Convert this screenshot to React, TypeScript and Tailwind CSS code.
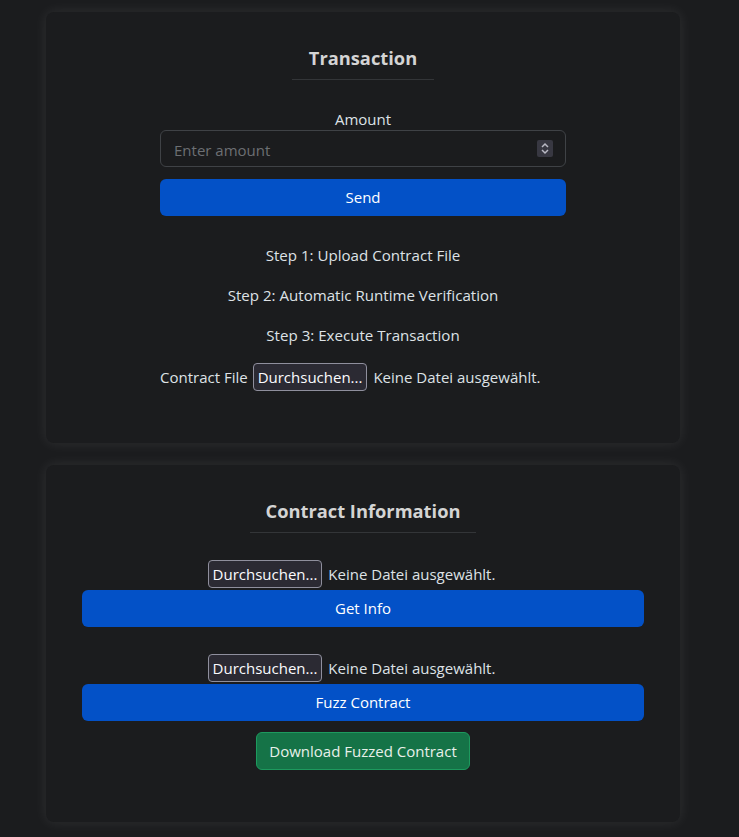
import React from "react";

const font = { fontFamily: '"Open Sans", "Noto Sans", sans-serif' };

function FileInput() {
  return (
    <div className="flex items-center gap-[6px] text-[15px] text-[#dee2e6] h-[28px]">
      <span className="h-[28px] px-[4px] flex items-center rounded-[4px] border border-[#8f8f9d] bg-[#2b2a33] text-[#fbfbfe]">
        Durchsuchen...
      </span>
      <span>Keine Datei ausgewählt.</span>
    </div>
  );
}

export default function App() {
  return (
    <div className="min-h-[837px] w-full bg-[#1b1c1e] pt-[12px] pb-[16px]" style={font}>
      <div className="ml-[46px] w-[634px] flex flex-col gap-[22px]">
        {/* Card 1 */}
        <div className="rounded-[8px] bg-[#1b1c1e] shadow-[0_0_14px_rgba(255,255,255,0.09)] pt-[24px] pb-[52px] flex flex-col items-center">
          <div className="pt-[10px] pb-[9px] px-[17px] border-b border-[#333538]">
            <h2 className="text-[18.3px] font-bold leading-6 text-[#d4d4d4]">Transaction</h2>
          </div>
          <div className="w-[406px] mt-[28px] flex flex-col items-center">
            <label className="text-[15px] leading-[22px] text-[#dee2e6]">Amount</label>
            <div className="w-full h-[37px] rounded-[6px] border border-[#3f4246] flex items-center justify-between pl-[13px] pr-[12px]">
              <span className="text-[15px] text-[#6c6f73] pt-[3px]">Enter amount</span>
              <span className="w-[16px] h-[17px] bg-[#383842] rounded-[2px] flex items-center justify-center">
                <svg width="10" height="13" viewBox="0 0 10 13" fill="none" stroke="#b9b9c4" strokeWidth="1.5">
                  <path d="M2 5 L5 2 L8 5" />
                  <path d="M2 8 L5 11 L8 8" />
                </svg>
              </span>
            </div>
            <button className="w-full h-[37px] mt-[12px] rounded-[6px] bg-[#0351c7] text-[15px] text-white">
              Send
            </button>
            <div className="mt-[27px] flex flex-col items-center gap-[16px] text-[15.1px] leading-6 text-[#dee2e6]">
              <p>Step 1: Upload Contract File</p>
              <p>Step 2: Automatic Runtime Verification</p>
              <p>Step 3: Execute Transaction</p>
            </div>
            <div className="mt-[16px] self-start flex items-center gap-[5px] text-[15px] text-[#dee2e6]">
              <span>Contract File</span>
              <FileInput />
            </div>
          </div>
        </div>

        {/* Card 2 */}
        <div className="rounded-[8px] bg-[#1b1c1e] shadow-[0_0_14px_rgba(255,255,255,0.09)] pt-[24px] pb-[52px] px-[36px] flex flex-col items-center">
          <div className="pt-[10px] pb-[9px] px-[16px] border-b border-[#333538]">
            <h2 className="text-[18.3px] font-bold leading-6 text-[#d4d4d4]">Contract Information</h2>
          </div>
          <div className="w-full mt-[27px] flex flex-col items-center">
            <div className="pr-[23px]">
              <FileInput />
            </div>
            <button className="w-full h-[37px] mt-[2px] rounded-[6px] bg-[#0351c7] text-[15px] text-white">
              Get Info
            </button>
            <div className="mt-[27px] pr-[23px]">
              <FileInput />
            </div>
            <button className="w-full h-[37px] mt-[2px] rounded-[6px] bg-[#0351c7] text-[15px] text-white">
              Fuzz Contract
            </button>
            <button className="h-[38px] mt-[11px] px-[12px] rounded-[6px] bg-[#157347] border border-[#1d9a5e] text-[15px] text-[#e8f0ea]">
              Download Fuzzed Contract
            </button>
          </div>
        </div>
      </div>
    </div>
  );
}
